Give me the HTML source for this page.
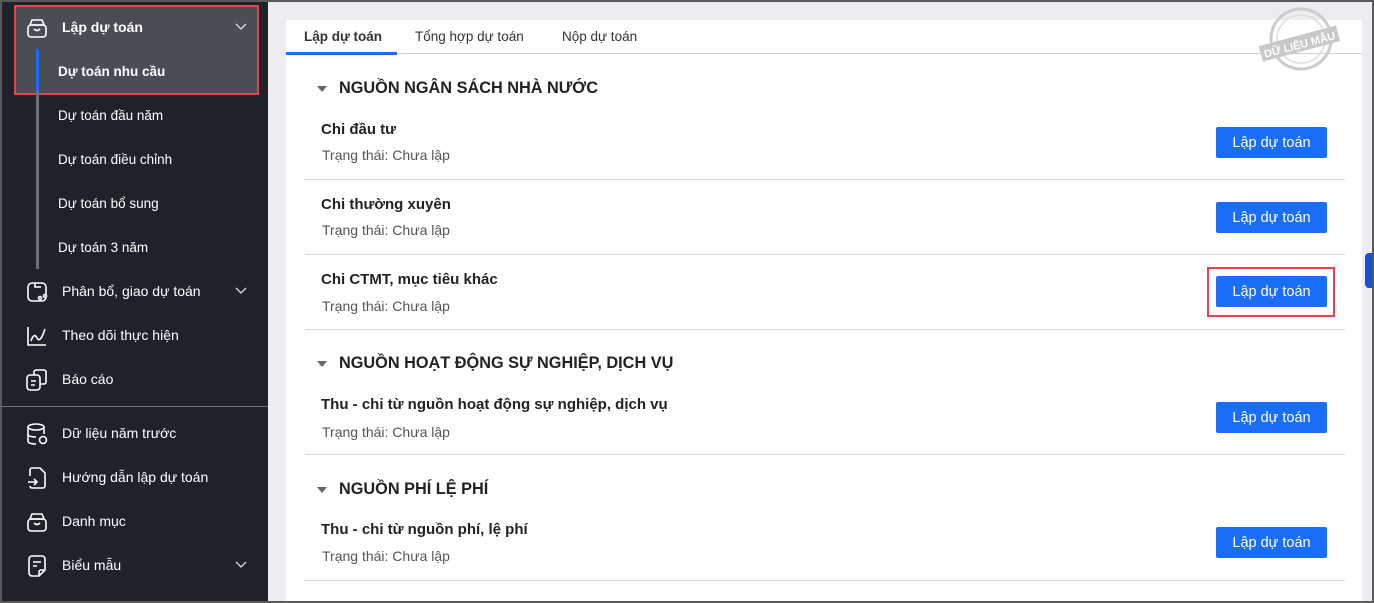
<!DOCTYPE html>
<html><head><meta charset="utf-8"><style>
*{box-sizing:border-box;margin:0;padding:0}
body{width:1374px;height:603px;overflow:hidden;font-family:"Liberation Sans",Arial,sans-serif;background:#ebedf0;position:relative}
.frame{position:absolute;inset:0;border:2px solid #5a5a5a;pointer-events:none;z-index:10}
.side{position:absolute;left:0;top:0;width:268px;height:603px;background:#1f222b;color:#fff}
.it{position:absolute;left:0;width:268px;height:44px;display:flex;align-items:center;font-size:14px}
.it .ic{position:absolute;left:25px;top:11px;width:24px;height:24px}
.it .tx{position:absolute;left:62px;top:14px}
.it .ch{position:absolute;left:235px;top:18px}
.sub{position:absolute;left:58px;font-size:13.5px;height:44px;display:flex;align-items:center}
.card{position:absolute;left:286px;top:20px;width:1076px;height:581px;background:#fff}
.tabs{position:absolute;left:0;top:0;width:1076px;height:34px;border-bottom:1px solid #ccd0d6}
.tab{position:absolute;top:9px;font-size:13.5px;color:#333}
.sec{position:absolute;left:53px;font-size:16.3px;font-weight:bold;color:#222}
.tri{position:absolute;left:31px;width:0;height:0;border-left:5px solid transparent;border-right:5px solid transparent;border-top:6px solid #666}
.ttl{position:absolute;left:35px;font-size:15px;font-weight:bold;color:#222}
.st{position:absolute;left:36px;font-size:14px;color:#555}
.hr{position:absolute;left:19px;width:1040px;height:1px;background:#d8dadd}
.btn{position:absolute;left:930px;width:111px;height:31px;background:#1a6ef5;color:#fff;border-radius:2px;font-size:14.5px;display:flex;align-items:center;justify-content:center}
svg{display:block}
</style></head><body>
<div class="side">
 <div style="position:absolute;left:16px;top:7px;width:241px;height:86px;background:#4a4d56"></div>
 <div style="position:absolute;left:14px;top:5px;width:245px;height:90px;border:2px solid #e8424a"></div>
 <div style="position:absolute;left:36px;top:49px;width:3px;height:220px;background:#6e7076"></div>
 <div style="position:absolute;left:36px;top:49px;width:3px;height:42px;background:#1a6ef5"></div>
 <div class="it" style="top:5px"><svg class="ic" viewBox="0 0 24 24" fill="none" stroke="#fff" stroke-width="1.6"><path d="M7 4h10l2 5H5z"/><rect x="3" y="9" width="18" height="12" rx="3"/><path d="M9 13q3 3 6 0"/></svg><span class="tx" style="font-weight:bold">Lập dự toán</span><svg class="ch" width="12" height="8" viewBox="0 0 12 8"><path d="M1 1l5 5 5-5" stroke="#ddd" fill="none" stroke-width="1.3"/></svg></div>
 <div class="sub" style="top:49px;font-weight:bold">Dự toán nhu cầu</div>
 <div class="sub" style="top:93px">Dự toán đầu năm</div>
 <div class="sub" style="top:137px">Dự toán điều chỉnh</div>
 <div class="sub" style="top:181px">Dự toán bổ sung</div>
 <div class="sub" style="top:225px">Dự toán 3 năm</div>
 <div class="it" style="top:269px"><svg class="ic" viewBox="0 0 24 24" fill="none" stroke="#fff" stroke-width="1.6"><rect x="3" y="3" width="18" height="18" rx="4"/><path d="M10 3v4h6"/><circle cx="15" cy="18" r="1.5"/><circle cx="20" cy="16" r="1.5"/></svg><span class="tx">Phân bổ, giao dự toán</span><svg class="ch" width="12" height="8" viewBox="0 0 12 8"><path d="M1 1l5 5 5-5" stroke="#ddd" fill="none" stroke-width="1.3"/></svg></div>
 <div class="it" style="top:313px"><svg class="ic" viewBox="0 0 24 24" fill="none" stroke="#fff" stroke-width="1.6"><path d="M3 3v18h18"/><path d="M6 17q3-9 6-3t8-9"/></svg><span class="tx">Theo dõi thực hiện</span></div>
 <div class="it" style="top:357px"><svg class="ic" viewBox="0 0 24 24" fill="none" stroke="#fff" stroke-width="1.6"><rect x="2" y="7" width="13" height="15" rx="3"/><path d="M9 7V4a2 2 0 012-2h8a2 2 0 012 2v10a2 2 0 01-2 2h-4"/><path d="M6 13h5M6 17h4"/></svg><span class="tx">Báo cáo</span></div>
 <div style="position:absolute;left:0;top:406px;width:268px;height:1px;background:#6e7076"></div>
 <div class="it" style="top:411px"><svg class="ic" viewBox="0 0 24 24" fill="none" stroke="#fff" stroke-width="1.6"><ellipse cx="11" cy="5" rx="8" ry="3"/><path d="M3 5v14q0 3 8 3M19 5v7M3 12q0 3 8 3"/><circle cx="18" cy="18" r="3.5"/></svg><span class="tx">Dữ liệu năm trước</span></div>
 <div class="it" style="top:455px"><svg class="ic" viewBox="0 0 24 24" fill="none" stroke="#fff" stroke-width="1.6"><path d="M5 10V4a2 2 0 012-2h8l5 5v13a2 2 0 01-2 2H7a2 2 0 01-2-2"/><path d="M3 16h9M9 13l3 3-3 3"/></svg><span class="tx">Hướng dẫn lập dự toán</span></div>
 <div class="it" style="top:499px"><svg class="ic" viewBox="0 0 24 24" fill="none" stroke="#fff" stroke-width="1.6"><path d="M7 4h10l2 5H5z"/><rect x="3" y="9" width="18" height="12" rx="3"/><path d="M9 13q3 3 6 0"/></svg><span class="tx">Danh mục</span></div>
 <div class="it" style="top:543px"><svg class="ic" viewBox="0 0 24 24" fill="none" stroke="#fff" stroke-width="1.6"><path d="M14 22H7a3 3 0 01-3-3V5a3 3 0 013-3h10a3 3 0 013 3v11z"/><path d="M8 8h8M8 12h4M14 22v-4a2 2 0 012-2h4"/></svg><span class="tx">Biểu mẫu</span><svg class="ch" width="12" height="8" viewBox="0 0 12 8"><path d="M1 1l5 5 5-5" stroke="#ddd" fill="none" stroke-width="1.3"/></svg></div>
</div>
<div class="card">
 <div class="tabs">
  <div class="tab" style="left:18px;font-weight:bold">Lập dự toán</div>
  <div class="tab" style="left:129px">Tổng hợp dự toán</div>
  <div class="tab" style="left:276px">Nộp dự toán</div>
  <div style="position:absolute;left:0;top:32px;width:111px;height:3px;background:#1a6ef5"></div>
 </div>
 <div class="tri" style="top:66px"></div><div class="sec" style="top:59px">NGUỒN NGÂN SÁCH NHÀ NƯỚC</div>
 <div class="ttl" style="top:101px">Chi đầu tư</div><div class="st" style="top:127px">Trạng thái: Chưa lập</div><div class="btn" style="top:107px">Lập dự toán</div>
 <div class="hr" style="top:159px"></div>
 <div class="ttl" style="top:176px">Chi thường xuyên</div><div class="st" style="top:202px">Trạng thái: Chưa lập</div><div class="btn" style="top:182px">Lập dự toán</div>
 <div class="hr" style="top:234px"></div>
 <div class="ttl" style="top:251px">Chi CTMT, mục tiêu khác</div><div class="st" style="top:278px">Trạng thái: Chưa lập</div><div class="btn" style="top:256px">Lập dự toán</div>
 <div style="position:absolute;left:921px;top:247px;width:128px;height:50px;border:2px solid #e8424a"></div>
 <div class="hr" style="top:309px"></div>
 <div class="tri" style="top:341px"></div><div class="sec" style="top:334px">NGUỒN HOẠT ĐỘNG SỰ NGHIỆP, DỊCH VỤ</div>
 <div class="ttl" style="top:376px">Thu - chi từ nguồn hoạt động sự nghiệp, dịch vụ</div><div class="st" style="top:404px">Trạng thái: Chưa lập</div><div class="btn" style="top:382px">Lập dự toán</div>
 <div class="hr" style="top:434px"></div>
 <div class="tri" style="top:467px"></div><div class="sec" style="top:460px">NGUỒN PHÍ LỆ PHÍ</div>
 <div class="ttl" style="top:501px">Thu - chi từ nguồn phí, lệ phí</div><div class="st" style="top:528px">Trạng thái: Chưa lập</div><div class="btn" style="top:507px">Lập dự toán</div>
 <div class="hr" style="top:560px"></div>
</div>
<svg style="position:absolute;left:1256px;top:6px" width="84" height="70" viewBox="0 0 84 70"><circle cx="45" cy="33" r="30" fill="none" stroke="#ccc" stroke-width="3"/><circle cx="45" cy="33" r="24" fill="none" stroke="#ddd" stroke-width="1.5"/><g transform="rotate(-15 42 40)"><rect x="4" y="30" width="80" height="16" fill="#c8c8c8"/><text x="44" y="43" font-size="11" font-weight="bold" fill="#fff" text-anchor="middle" font-family="Liberation Sans">DỮ LIỆU MẪU</text></g></svg>
<div style="position:absolute;left:1365px;top:253px;width:9px;height:35px;background:#1a4fd6;border-radius:4px 0 0 4px"></div>
<div class="frame"></div>
</body></html>
